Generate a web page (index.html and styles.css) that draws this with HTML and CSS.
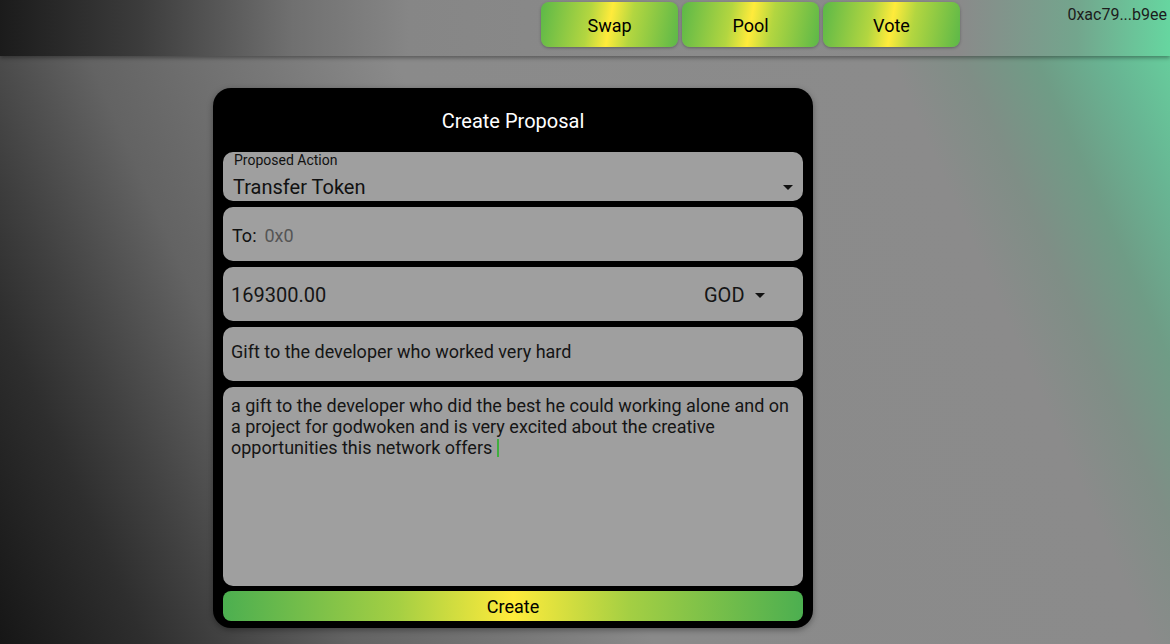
FILE: index.html
```html
<!DOCTYPE html>
<html lang="en">
<head>
<meta charset="utf-8">
<title>Create Proposal</title>
<link rel="stylesheet" href="styles.css">
</head>
<body>
<header class="topbar">
  <div class="topbar-spacer"></div>
  <nav class="nav">
    <button class="nav-btn">Swap</button>
    <button class="nav-btn">Pool</button>
    <button class="nav-btn">Vote</button>
  </nav>
  <div class="account">0xac79...b9ee</div>
</header>
<main class="main">
  <section class="card">
    <h1 class="card-title">Create Proposal</h1>
    <div class="field field-select">
      <span class="field-label">Proposed Action</span>
      <div class="select-row">
        <span class="select-value">Transfer Token</span>
        <svg class="caret" viewBox="0 0 10 5" width="10" height="5"><path d="M0 0L5 5L10 0Z"/></svg>
      </div>
    </div>
    <div class="field field-to">
      <span class="to-label">To:</span>
      <span class="placeholder">0x0</span>
    </div>
    <div class="field field-amount">
      <span class="amount">169300.00</span>
      <div class="token-select">
        <span class="token">GOD</span>
        <svg class="caret" viewBox="0 0 10 5" width="10" height="5"><path d="M0 0L5 5L10 0Z"/></svg>
      </div>
    </div>
    <div class="field field-title">
      <span class="text">Gift to the developer who worked very hard</span>
    </div>
    <div class="field field-desc">
      <p class="desc">a gift to the developer who did the best he could working alone and on a project for godwoken and is very excited about the creative opportunities this network offers <span class="cursor"></span></p>
    </div>
    <button class="create-btn">Create</button>
  </section>
</main>
</body>
</html>
```
FILE: styles.css
```css
* { box-sizing: border-box; }
html, body { height: 100%; }
body {
  margin: 0;
  font-family: Roboto, "Noto Sans", Arial, sans-serif;
  background: linear-gradient(66deg, #161616 0%, #2e2e2e 10%, #404040 15%, #636363 24%, #787878 36%, #8a8a8a 45%, #8b8b8b 79%, #7f8e86 84%, #6f9c86 89%, #68b593 94%, #66d6a0 100%);
  overflow: hidden;
}
.topbar {
  height: 56px;
  display: grid;
  grid-template-columns: 1fr auto 210px;
  background: linear-gradient(90deg, #1b1b1b 0%, #3c3c3c 12%, #707070 25%, #868686 35%, #8b8b8b 60%, #8a8a8a 82%, #73a58d 92%, #66d6a0 100%);
  box-shadow: 0 2px 4px rgba(0,0,0,0.35);
  position: relative;
  z-index: 1;
}
.nav {
  display: flex;
  gap: 4px;
  padding-top: 2px;
  align-items: flex-start;
}
.nav-btn {
  width: 137px;
  height: 45px;
  border: none;
  border-radius: 8px;
  background: linear-gradient(100deg, #5cb848 0%, #b3d640 35%, #ffeb3b 50%, #b3d640 65%, #5cb848 100%);
  font-family: Roboto, Arial, sans-serif;
  font-size: 18px;
  color: #000;
  box-shadow: 0 1px 3px rgba(0,0,0,0.3);
  padding: 2px 0 0 0;
}
.account {
  text-align: right;
  padding: 5px 3px 0 0;
  font-size: 16px;
  color: #1c1c1c;
  line-height: 19px;
}
.main {
  padding: 32px 0 0 213px;
}
.card {
  width: 600px;
  height: 540px;
  background: #000;
  border-radius: 18px;
  padding: 0 10px 7px;
  display: flex;
  flex-direction: column;
  gap: 6px;
  box-shadow: 0 2px 6px rgba(0,0,0,0.35);
}
.card-title {
  margin: 0;
  height: 58px;
  padding-top: 21px;
  font-weight: 400;
  font-size: 20px;
  line-height: 24px;
  color: #fff;
  text-align: center;
}
.field {
  background: #9f9f9f;
  border-radius: 10px;
  color: #151515;
  flex-shrink: 0;
}
.field-select {
  height: 49px;
  padding: 0 10px 0 10px;
  display: flex;
  flex-direction: column;
}
.field-label {
  font-size: 14px;
  line-height: 16px;
  padding-left: 1px;
  color: #111;
}
.select-row {
  display: flex;
  align-items: center;
  justify-content: space-between;
  height: 24px;
  margin-top: 7px;
}
.select-value {
  font-size: 20px;
  line-height: 24px;
  color: #111;
}
.caret { fill: #111; display: block; }
.field-to {
  height: 54px;
  display: flex;
  align-items: center;
  padding: 2px 0 0 9px;
  font-size: 18px;
}
.to-label { color: #111; margin-right: 8px; }
.placeholder { color: #555; }
.field-amount {
  height: 54px;
  display: flex;
  align-items: center;
  padding-left: 8px;
  padding-top: 2px;
}
.amount {
  flex: 1;
  font-size: 20px;
  color: #151515;
}
.token-select {
  width: 99px;
  display: flex;
  align-items: center;
  gap: 10px;
  font-size: 20px;
}
.field-title {
  height: 54px;
  display: flex;
  align-items: center;
  padding: 0 8px 6px;
  font-size: 18px;
}
.field-desc {
  height: 199px;
  padding: 8px 8px;
}
.desc {
  margin: 0;
  font-size: 18px;
  line-height: 21px;
  color: #151515;
}
.cursor {
  display: inline-block;
  width: 2px;
  height: 18px;
  background: #3fae3f;
  vertical-align: -3px;
}
.create-btn {
  margin-top: -1px;
  height: 30px;
  border: none;
  border-radius: 8px;
  background: linear-gradient(90deg, #4caf50 0%, #a4cf43 30%, #ffeb3b 50%, #a4cf43 70%, #4caf50 100%);
  font-family: Roboto, Arial, sans-serif;
  font-size: 18px;
  color: #000;
  flex-shrink: 0;
  padding: 0;
}
```
